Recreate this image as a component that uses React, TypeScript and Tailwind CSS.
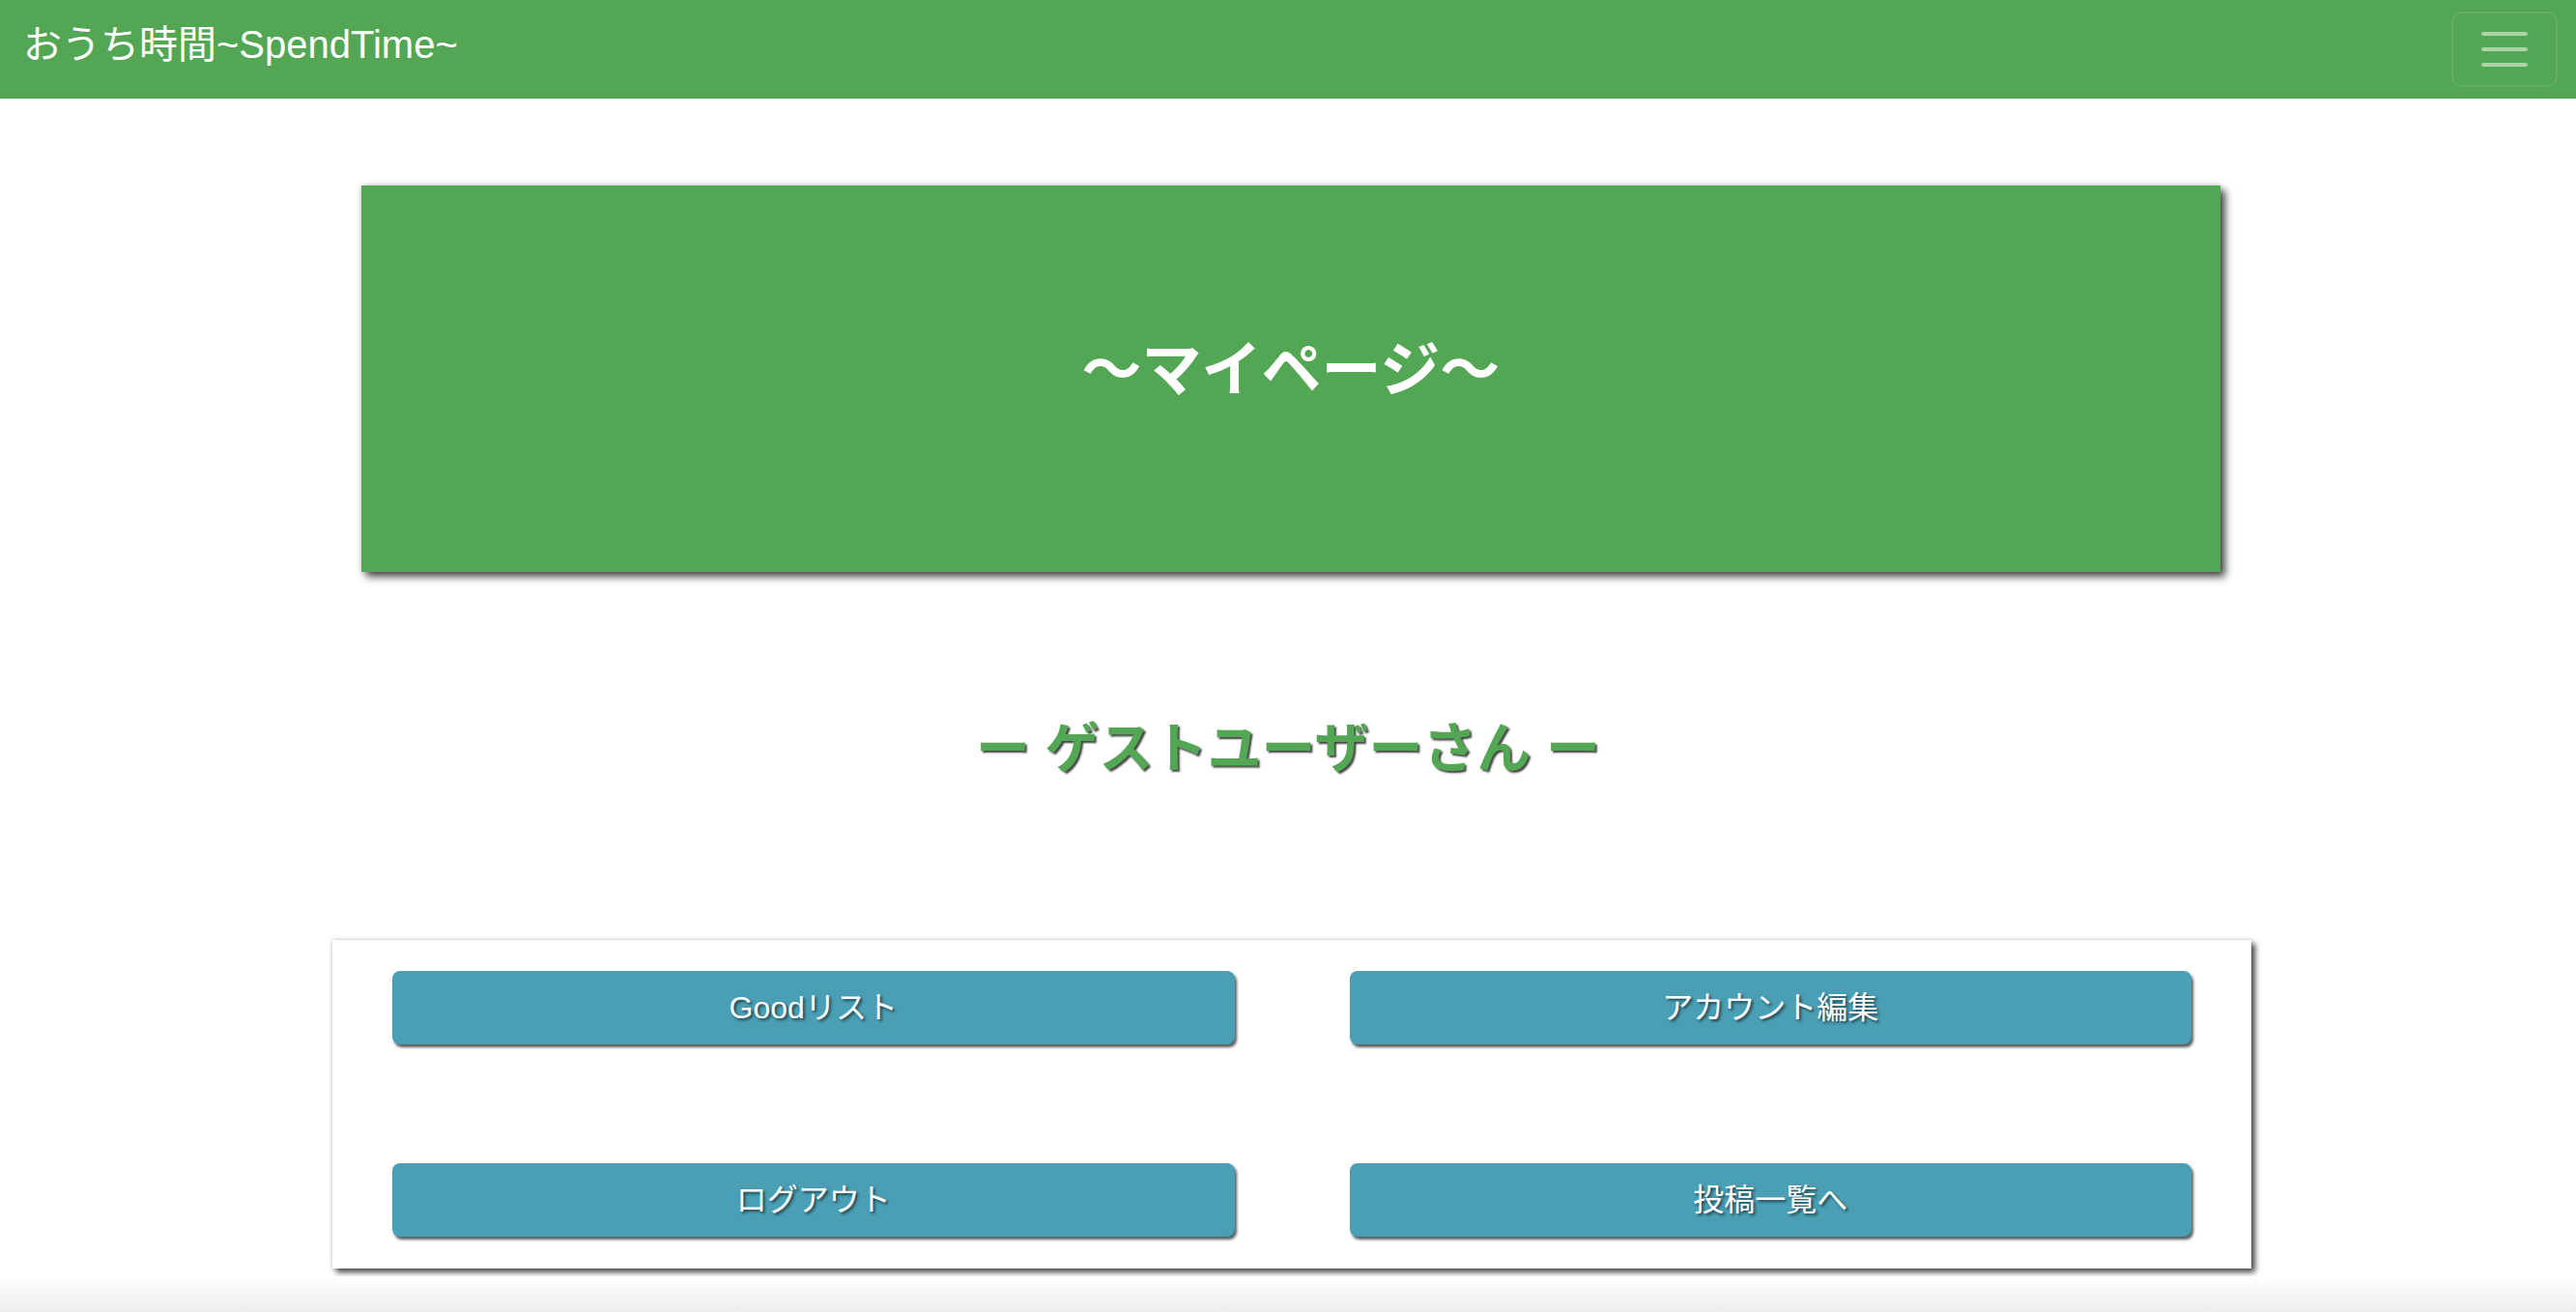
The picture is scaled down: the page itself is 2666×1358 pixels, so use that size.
import React from 'react';

const buttons = ['Goodリスト', 'アカウント編集', 'ログアウト', '投稿一覧へ'];

export default function App() {
  return (
    <div className="min-h-screen bg-white font-['Liberation_Sans','Noto_Sans_CJK_JP',sans-serif] overflow-hidden">

      {/* NAVBAR */}
      <nav className="h-[102px] bg-[#53a653] flex items-center justify-between pl-[24px] pr-[19px]">
        <a className="text-[40px] text-white leading-none pb-[10px]">おうち時間~SpendTime~</a>
        <button className="w-[110px] h-[78px] border-2 border-white/10 rounded-[10px] flex flex-col items-center justify-center gap-[12px]">
          <span className="block w-[48px] h-[4px] bg-white/50 rounded-full"></span>
          <span className="block w-[48px] h-[4px] bg-white/50 rounded-full"></span>
          <span className="block w-[48px] h-[4px] bg-white/50 rounded-full"></span>
        </button>
      </nav>

      {/* HERO */}
      <div className="mt-[90px] ml-[374px] w-[1924px] h-[400px] bg-[#53a653] flex items-center justify-center pb-[16px] shadow-[5px_5px_8px_rgba(0,0,0,0.7),0_0_6px_rgba(0,0,0,0.2)]">
        <h1 className="text-[62px] font-bold text-white leading-none">〜マイページ〜</h1>
      </div>

      {/* USER NAME */}
      <h2 className="mt-[155px] text-center text-[56px] font-bold leading-none text-[#53a653] [text-shadow:2px_2px_2px_rgba(0,0,0,0.75)]">
        ー ゲストユーザーさん ー
      </h2>

      {/* MENU */}
      <div className="mt-[170px] ml-[344px] w-[1986px] bg-white px-[62px] pt-[32px] pb-[33px] grid grid-cols-2 gap-x-[119px] gap-y-[123px] shadow-[4px_4px_6px_rgba(0,0,0,0.7),0_0_5px_rgba(0,0,0,0.2)]">
        {buttons.map((label) => (
          <button
            key={label}
            className="h-[76px] rounded-[8px] bg-[#4a9fb5] text-white text-[32px] flex items-center justify-center shadow-[2px_3px_3px_rgba(0,0,0,0.65)] [text-shadow:2px_2px_3px_rgba(0,0,0,0.6)]"
          >
            {label}
          </button>
        ))}
      </div>

      <div className="mt-[8px] h-[40px] bg-linear-to-b from-white to-[#ececec]"></div>
    </div>
  );
}
